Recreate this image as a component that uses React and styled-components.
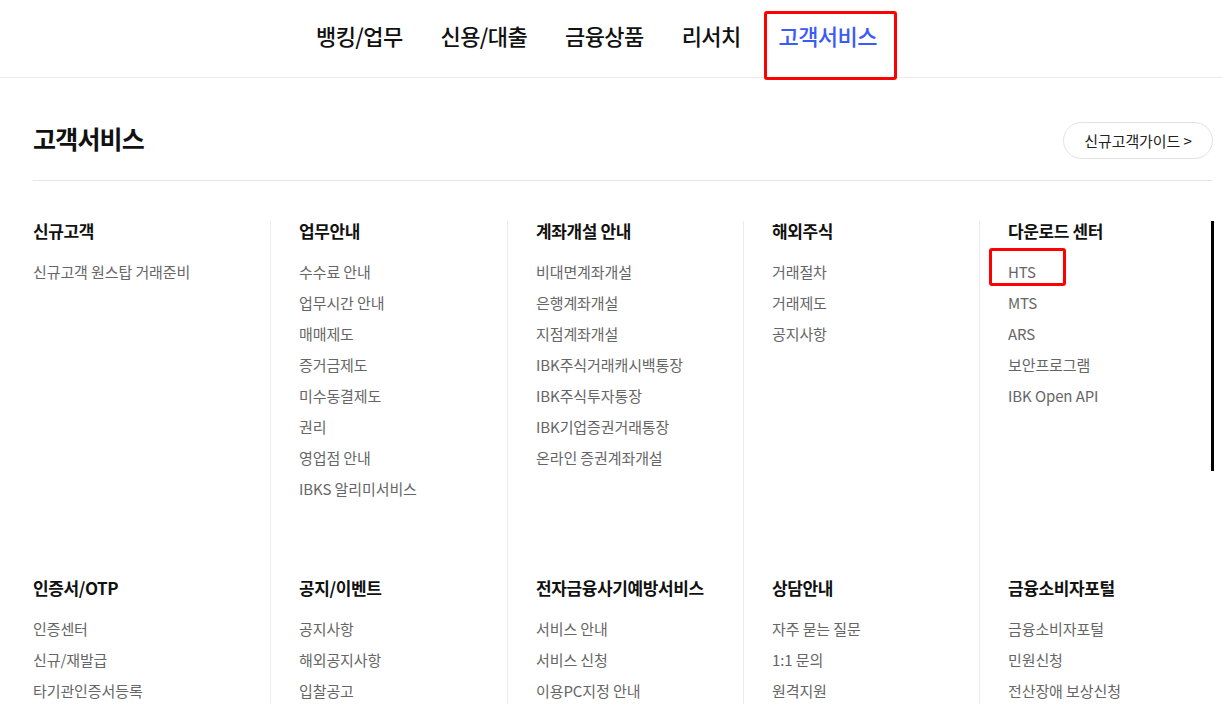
import React from 'react';
import styled, { createGlobalStyle } from 'styled-components';

const GlobalStyle = createGlobalStyle`
  body {
    margin: 0;
    background: #fff;
    font-family: 'Noto Sans CJK KR', 'Noto Sans', sans-serif;
    color: #111;
  }
`;

const StyledHeader = styled.header`
  height: 78px;
  border-bottom: 1px solid #ececec;
  box-sizing: border-box;
  display: flex;
  align-items: center;
  padding: 0 0 8px 316px;
  gap: 38px;
`;

const NavItem = styled.a`
  position: relative;
  font-size: 22px;
  font-weight: 500;
  line-height: 30px;
  letter-spacing: -0.6px;
  color: ${({ $active }) => ($active ? '#3a5bf5' : '#111')};
  text-decoration: none;

  ${({ $marked }) =>
    $marked &&
    `
    &:after {
      content: '';
      position: absolute;
      left: -15px;
      right: -20px;
      top: -9px;
      bottom: -30px;
      border: 3px solid #f00;
      border-radius: 3px;
    }
  `}
`;

const StyledMain = styled.main`
  width: 1180px;
  margin-left: 33px;
`;

const TitleRow = styled.div`
  display: flex;
  align-items: center;
  justify-content: space-between;
  padding: 44px 0 21px;
  border-bottom: 1px solid #e6e6e6;
`;

const Title = styled.h2`
  margin: 0;
  font-size: 25px;
  font-weight: 700;
  letter-spacing: -0.8px;
  line-height: 30px;
  padding-bottom: 6px;
`;

const GuideButton = styled.button`
  width: 150px;
  height: 37px;
  border: 1px solid #e2e2e2;
  border-radius: 19px;
  background: #fff;
  font-family: inherit;
  font-size: 15px;
  letter-spacing: -0.1px;
  color: #222;
  cursor: pointer;
`;

const MenuGrid = styled.div`
  position: relative;
  display: grid;
  grid-template-columns: 237px 237px 236px 236px 234px;
  margin-top: 40px;
`;

const Column = styled.section`
  padding: 0 0 74px ${({ $first }) => ($first ? '0' : '28px')};
  border-left: ${({ $first }) => ($first ? 'none' : '1px solid #ececec')};
`;

const Heading = styled.h3`
  margin: 0;
  font-size: 17px;
  font-weight: 700;
  line-height: 20px;
  letter-spacing: -0.4px;
  color: #111;
`;

const LinkList = styled.ul`
  list-style: none;
  margin: 15px 0 0;
  padding: 0;
`;

const LinkItem = styled.li`
  font-size: 15px;
  line-height: 31px;
  letter-spacing: -0.1px;
  color: #666;
`;

const LinkText = styled.span`
  position: relative;

  ${({ $marked }) =>
    $marked &&
    `
    &:after {
      content: '';
      position: absolute;
      left: -19px;
      top: -13px;
      width: 77px;
      height: 38px;
      box-sizing: border-box;
      border: 3px solid #f00;
      border-radius: 3px;
    }
  `}
`;

const ScrollThumb = styled.div`
  position: absolute;
  top: 0;
  right: -1px;
  width: 3px;
  height: 250px;
  background: #000;
`;

const nav = ['뱅킹/업무', '신용/대출', '금융상품', '리서치', '고객서비스'];

const groups = [
  { title: '신규고객', links: ['신규고객 원스탑 거래준비'] },
  {
    title: '업무안내',
    links: ['수수료 안내', '업무시간 안내', '매매제도', '증거금제도', '미수동결제도', '권리', '영업점 안내', 'IBKS 알리미서비스'],
  },
  {
    title: '계좌개설 안내',
    links: ['비대면계좌개설', '은행계좌개설', '지점계좌개설', 'IBK주식거래캐시백통장', 'IBK주식투자통장', 'IBK기업증권거래통장', '온라인 증권계좌개설'],
  },
  { title: '해외주식', links: ['거래절차', '거래제도', '공지사항'] },
  { title: '다운로드 센터', links: ['HTS', 'MTS', 'ARS', '보안프로그램', 'IBK Open API'] },
  { title: '인증서/OTP', links: ['인증센터', '신규/재발급', '타기관인증서등록'] },
  { title: '공지/이벤트', links: ['공지사항', '해외공지사항', '입찰공고'] },
  { title: '전자금융사기예방서비스', links: ['서비스 안내', '서비스 신청', '이용PC지정 안내'] },
  { title: '상담안내', links: ['자주 묻는 질문', '1:1 문의', '원격지원'] },
  { title: '금융소비자포털', links: ['금융소비자포털', '민원신청', '전산장애 보상신청'] },
];

const App = () => (
  <>
    <GlobalStyle />
    <StyledHeader>
      {nav.map((item, i) => (
        <NavItem key={item} href="#" $active={i === 4} $marked={i === 4}>
          {item}
        </NavItem>
      ))}
    </StyledHeader>

    <StyledMain>
      <TitleRow>
        <Title>고객서비스</Title>
        <GuideButton>신규고객가이드 &gt;</GuideButton>
      </TitleRow>

      <MenuGrid>
        {groups.map((group, i) => (
          <Column key={group.title} $first={i % 5 === 0}>
            <Heading>{group.title}</Heading>
            <LinkList>
              {group.links.map((link) => (
                <LinkItem key={link}>
                  <LinkText $marked={link === 'HTS'}>{link}</LinkText>
                </LinkItem>
              ))}
            </LinkList>
          </Column>
        ))}
        <ScrollThumb />
      </MenuGrid>
    </StyledMain>
  </>
);

export default App;
